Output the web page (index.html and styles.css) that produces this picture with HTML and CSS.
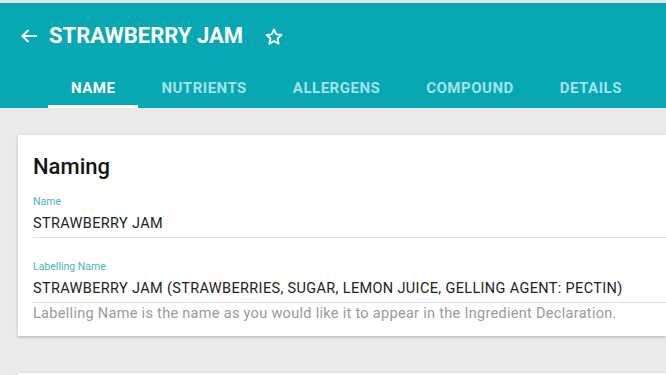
FILE: index.html
```html
<!DOCTYPE html>
<html>
<head>
<meta charset="utf-8">
<link rel="stylesheet" href="styles.css">
</head>
<body>
<div class="topstrip"></div>
<header class="appbar">
  <div class="titlerow">
    <svg class="back" width="18" height="16" viewBox="0 0 18 16"><path d="M17 8H2.5M8.5 2L2.5 8l6 6" fill="none" stroke="#fff" stroke-width="2"/></svg>
    <h1 class="title">STRAWBERRY JAM</h1>
    <svg class="star" width="20" height="20" viewBox="0 0 24 24"><path d="M12 3l2.7 5.8 6.3.7-4.7 4.3 1.3 6.3L12 16.9l-5.6 3.2 1.3-6.3L3 9.5l6.3-.7z" fill="none" stroke="#fff" stroke-width="2.2" stroke-linejoin="round"/></svg>
  </div>
  <nav class="tabs">
    <div class="tab active">NAME</div>
    <div class="tab">NUTRIENTS</div>
    <div class="tab">ALLERGENS</div>
    <div class="tab">COMPOUND</div>
    <div class="tab">DETAILS</div>
  </nav>
</header>
<main class="content">
  <section class="card">
    <h2 class="card-title">Naming</h2>
    <div class="field">
      <div class="label">Name</div>
      <div class="value">STRAWBERRY JAM</div>
    </div>
    <div class="field">
      <div class="label">Labelling Name</div>
      <div class="value">STRAWBERRY JAM (STRAWBERRIES, SUGAR, LEMON JUICE, GELLING AGENT: PECTIN)</div>
      <div class="hint">Labelling Name is the name as you would like it to appear in the Ingredient Declaration.</div>
    </div>
  </section>
  <section class="card second"></section>
</main>
</body>
</html>
```
FILE: styles.css
```css
html, body {
  margin: 0;
  padding: 0;
  width: 666px;
  height: 375px;
  overflow: hidden;
  background: #ebeaea;
  font-family: Roboto, "Noto Sans", sans-serif;
}
.topstrip {
  height: 3px;
  background: #e2e4e4;
}
.appbar {
  background: #07a8b3;
  color: #fff;
  height: 105px;
  display: flex;
  flex-direction: column;
}
.titlerow {
  height: 66px;
  display: flex;
  align-items: center;
  padding-left: 20px;
}
.back {
  display: block;
  margin-right: 11px;
}
.title {
  margin: 0;
  font-size: 22px;
  font-weight: 700;
  letter-spacing: 0;
  line-height: 26px;
}
.star {
  display: block;
  margin-left: 21px;
  margin-top: 1px;
}
.tabs {
  display: flex;
  padding-left: 48px;
  height: 39px;
}
.tab {
  box-sizing: border-box;
  height: 39px;
  padding: 0 23px;
  font-size: 15px;
  font-weight: 700;
  letter-spacing: 0.5px;
  color: #a3e2e6;
  border-bottom: 3px solid transparent;
  line-height: 38px;
}
.tab.active {
  color: #fff;
  border-bottom-color: #fff;
}
.content {
  padding: 27px 0 0 18px;
}
.card {
  background: #fff;
  box-shadow: 0 1px 3px rgba(0,0,0,0.25);
  padding: 18px 0 12px 15px;
}
.card.second {
  margin-top: 37px;
  height: 40px;
}
.card-title {
  margin: 0 0 14px;
  font-size: 22px;
  font-weight: 500;
  line-height: 28px;
  color: #151515;
}
.field {
  margin-bottom: 22px;
}
.field:last-child {
  margin-bottom: 0;
}
.label {
  font-size: 10.5px;
  color: #4ab3bb;
  line-height: 13px;
}
.value {
  font-size: 14.5px;
  color: #222;
  line-height: 20px;
  padding: 6px 0 3px;
  border-bottom: 1px solid #dedede;
  letter-spacing: 0.35px;
}
.hint {
  font-size: 14.5px;
  color: #9a9a9a;
  line-height: 20px;
  padding-top: 1px;
  letter-spacing: 0.3px;
}
```
